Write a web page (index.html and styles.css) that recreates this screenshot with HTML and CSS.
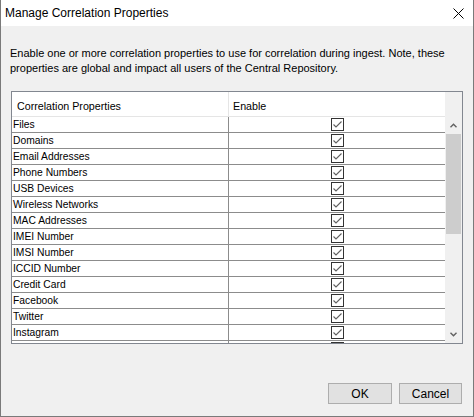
FILE: index.html
```html
<!DOCTYPE html>
<html>
<head>
<meta charset="utf-8">
<link rel="stylesheet" href="styles.css">
</head>
<body>
<div class="window">
  <div class="titlebar">
    <span class="title">Manage Correlation Properties</span>
    <svg class="close" width="11" height="11" viewBox="0 0 11 11"><path d="M0.5 0.5 L10.5 10.5 M10.5 0.5 L0.5 10.5" stroke="#000" stroke-width="1" fill="none"/></svg>
  </div>
  <div class="content">
    <p class="desc">Enable one or more correlation properties to use for correlation during ingest. Note, these properties are global and impact all users of the Central Repository.</p>
    <div class="table">
      <div class="grid">
        <div class="head">
          <div class="hcell c1">Correlation Properties</div>
          <div class="hcell c2">Enable</div>
        </div>
        <div class="row"><div class="cell c1">Files</div><div class="cell c2"><span class="check"></span></div></div>
        <div class="row"><div class="cell c1">Domains</div><div class="cell c2"><span class="check"></span></div></div>
        <div class="row"><div class="cell c1">Email Addresses</div><div class="cell c2"><span class="check"></span></div></div>
        <div class="row"><div class="cell c1">Phone Numbers</div><div class="cell c2"><span class="check"></span></div></div>
        <div class="row"><div class="cell c1">USB Devices</div><div class="cell c2"><span class="check"></span></div></div>
        <div class="row"><div class="cell c1">Wireless Networks</div><div class="cell c2"><span class="check"></span></div></div>
        <div class="row"><div class="cell c1">MAC Addresses</div><div class="cell c2"><span class="check"></span></div></div>
        <div class="row"><div class="cell c1">IMEI Number</div><div class="cell c2"><span class="check"></span></div></div>
        <div class="row"><div class="cell c1">IMSI Number</div><div class="cell c2"><span class="check"></span></div></div>
        <div class="row"><div class="cell c1">ICCID Number</div><div class="cell c2"><span class="check"></span></div></div>
        <div class="row"><div class="cell c1">Credit Card</div><div class="cell c2"><span class="check"></span></div></div>
        <div class="row"><div class="cell c1">Facebook</div><div class="cell c2"><span class="check"></span></div></div>
        <div class="row"><div class="cell c1">Twitter</div><div class="cell c2"><span class="check"></span></div></div>
        <div class="row"><div class="cell c1">Instagram</div><div class="cell c2"><span class="check"></span></div></div>
        <div class="row"><div class="cell c1 partial">WhatsApp</div><div class="cell c2"><span class="check"></span></div></div>
      </div>
      <div class="scrollbar">
        <div class="corner"></div>
        <div class="track">
          <div class="arrow"><svg width="7" height="5" viewBox="0 0 7 5"><path d="M0.5 4.2 L3.5 1.2 L6.5 4.2" stroke="#606060" stroke-width="1.4" fill="none"/></svg></div>
          <div class="thumb"></div>
          <div class="spacer"></div>
          <div class="arrow"><svg width="7" height="5" viewBox="0 0 7 5"><path d="M0.5 0.8 L3.5 3.8 L6.5 0.8" stroke="#606060" stroke-width="1.4" fill="none"/></svg></div>
        </div>
      </div>
    </div>
    <div class="buttons">
      <button class="btn ok">OK</button>
      <button class="btn cancel">Cancel</button>
    </div>
  </div>
</div>
</body>
</html>
```

FILE: styles.css
```css
* { box-sizing: border-box; }
html, body { margin: 0; padding: 0; }
body {
  width: 474px;
  height: 417px;
  overflow: hidden;
  font-family: "Liberation Sans", Arial, sans-serif;
  background: #f0f0f0;
}
.window {
  width: 474px;
  height: 417px;
  border: 1px solid #7a7a7a;
  border-top: none;
  background: #f0f0f0;
  display: flex;
  flex-direction: column;
}
.titlebar {
  height: 26px;
  flex: none;
  background: #fff;
  display: flex;
  align-items: center;
  justify-content: space-between;
  padding: 0 9px 0 4px;
}
.title { font-size: 12px; color: #000; }
.close { display: block; }
.content {
  flex: 1;
  display: flex;
  flex-direction: column;
  padding: 20px 10px 0 10px;
}
.desc {
  margin: 0 0 15px -1px;
  font-size: 11px;
  line-height: 15px;
  color: #000;
  height: 30px;
}
.table {
  height: 253px;
  flex: none;
  border: 1px solid #828790;
  background: #fff;
  display: flex;
}
.grid {
  flex: 1;
  min-width: 0;
  display: flex;
  flex-direction: column;
  overflow: hidden;
}
.head {
  height: 25px;
  flex: none;
  display: flex;
  border-bottom: 1px solid #e5e5e5;
}
.hcell {
  font-size: 10.7px;
  color: #000;
  display: flex;
  align-items: center;
  padding-top: 3px;
}
.hcell.c1 { width: 217px; padding-left: 5px; border-right: 1px solid #e5e5e5; }
.hcell.c2 { flex: 1; padding-left: 4px; }
.row {
  height: 16px;
  flex: none;
  display: flex;
  border-bottom: 1px solid #8c8c8c;
}
.cell.c1 {
  width: 217px;
  border-right: 1px solid #8c8c8c;
  padding-left: 1px;
  font-size: 10.3px;
  line-height: 15px;
  color: #000;
  white-space: nowrap;
  overflow: hidden;
}
.cell.c2 {
  flex: 1;
  display: flex;
  align-items: center;
  justify-content: center;
}
.check {
  width: 13px;
  height: 13px;
  border: 1px solid #333;
  background: #fff url("data:image/svg+xml,%3Csvg xmlns='http://www.w3.org/2000/svg' width='11' height='11' viewBox='0 0 11 11'%3E%3Cpath d='M1.5 5.5 L4 8 L9.5 2.5' stroke='%23606060' stroke-width='1.1' fill='none'/%3E%3C/svg%3E") no-repeat center;
}
.scrollbar {
  width: 17px;
  flex: none;
  display: flex;
  flex-direction: column;
  background: #f0f0f0;
}
.corner { height: 25px; flex: none; background: #f0f0f0; }
.track { flex: 1; display: flex; flex-direction: column; }
.arrow {
  height: 17px;
  flex: none;
  display: flex;
  align-items: center;
  justify-content: center;
}
.arrow svg { display: block; }
.thumb {
  height: 100px;
  flex: none;
  margin: 0 1px;
  background: #cdcdcd;
}
.spacer { flex: 1; }
.buttons {
  display: flex;
  justify-content: flex-end;
  gap: 7px;
  margin-top: 39px;
  padding-right: 1px;
}
.btn {
  height: 21px;
  padding: 0;
  background: #e1e1e1;
  border: 1px solid #adadad;
  font-family: "Liberation Sans", Arial, sans-serif;
  font-size: 12px;
  color: #000;
}
.btn.ok { width: 64px; }
.btn.cancel { width: 63px; }
```
